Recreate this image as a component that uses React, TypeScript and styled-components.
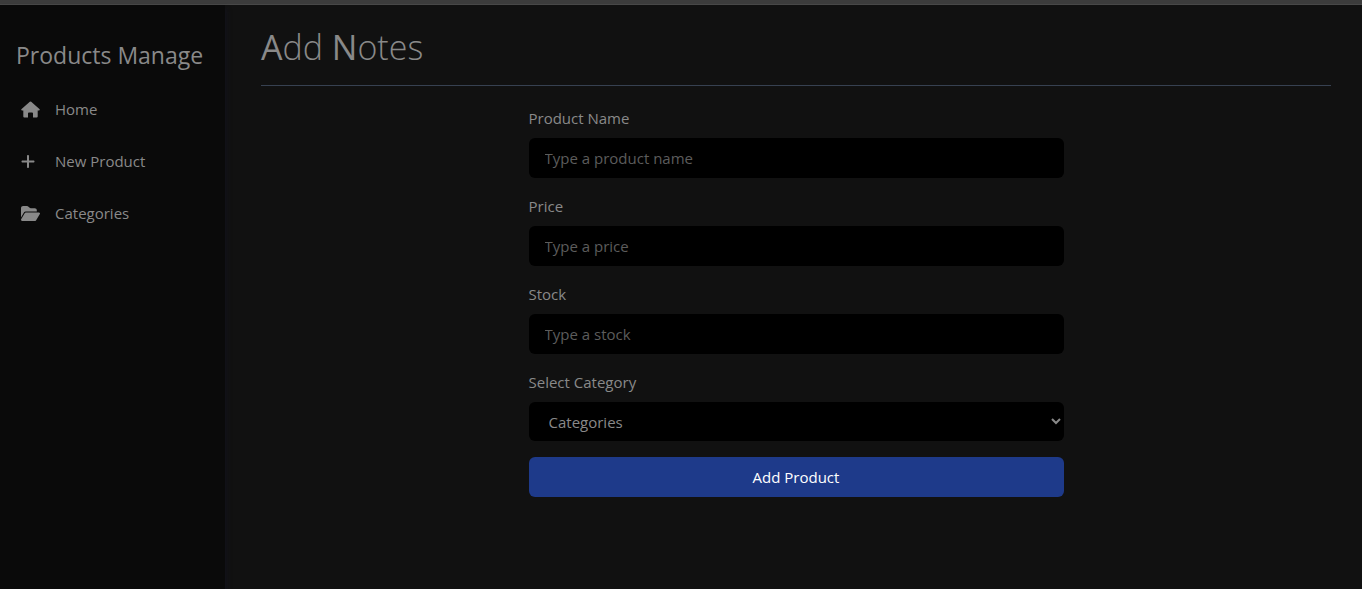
import React from "react";
import styled, { createGlobalStyle } from "styled-components";
import { FaPlus, FaFolderOpen } from "react-icons/fa6";

const GlobalStyle = createGlobalStyle`
  *, *::before, *::after { box-sizing: border-box; }
  body {
    margin: 0;
    background: #111111;
    color: #898989;
    font: 15px/24px "Open Sans", "Noto Sans", sans-serif;
  }
`;

const Page = styled.div`
  display: flex;
  flex-direction: column;
  min-height: 100vh;
`;

const TopBar = styled.div`
  height: 5px;
  background: #3c3c3c;
  border-bottom: 1px solid #484848;
`;

const Body = styled.div`
  display: flex;
  flex: 1;
`;

const Sidebar = styled.aside`
  flex: none;
  width: 225px;
  padding: 32px 16px;
  background: #0a0a0a;
  box-shadow: 2px 4px 4px #12121a;
`;

const Brand = styled.h2`
  margin: 0 0 20px;
  font-size: 23px;
  line-height: 36px;
  font-weight: 400;
  white-space: nowrap;
`;

const Nav = styled.nav`
  display: flex;
  flex-direction: column;
  gap: 20px;
`;

const NavLink = styled.a`
  display: flex;
  align-items: center;
  height: 32px;
  padding-left: 5px;
  color: inherit;
  text-decoration: none;
`;

const NavIcon = styled.span<{ $size: number }>`
  display: flex;
  width: 34px;

  svg {
    width: ${({ $size }) => $size}px;
    height: 17px;
  }
`;

const Main = styled.main`
  flex: 1;
  padding: 20px 31px 20px 36px;
`;

const Title = styled.h1`
  margin: 0 0 20px;
  padding-bottom: 15px;
  border-bottom: 1px solid #374151;
  font-size: 34px;
  line-height: 45px;
  font-weight: 300;
`;

const Capital = styled.span`
  font-weight: 400;
`;

const Form = styled.form`
  display: flex;
  flex-direction: column;
  gap: 16px;
  width: 50%;
  margin: 0 auto;
`;

const Field = styled.div`
  display: flex;
  flex-direction: column;
  gap: 8px;
`;

const Label = styled.label`
  line-height: 24px;
`;

const Input = styled.input`
  height: 40px;
  padding: 0 16px;
  border: 0;
  border-radius: 6px;
  background: #000000;
  color: inherit;
  font: inherit;

  &::placeholder { color: #5c5c5c; opacity: 1; }
`;

const Select = styled.select`
  height: 39px;
  padding: 0 16px;
  border: 0;
  border-radius: 6px;
  background: #000000;
  color: inherit;
  font: inherit;
`;

const Submit = styled.button`
  height: 40px;
  border: 0;
  border-radius: 6px;
  background: #1e3a8a;
  color: #ffffff;
  font: inherit;
`;

const HomeIcon = () => (
  <svg viewBox="0 0 19 17" fill="currentColor" aria-hidden="true">
    <path d="M8.8.8a1 1 0 0 1 1.4 0l8.2 7.2c.7.6.3 1.5-.5 1.5h-1.2v6a1 1 0 0 1-1 1H12v-4a1 1 0 0 0-1-1H8a1 1 0 0 0-1 1v4H3.300a1 1 0 0 1-1-1v-6H1.100C.3 9.500-.1 8.600.6 8z" />
  </svg>
);

const links = [
  { label: "Home", icon: <HomeIcon />, size: 19 },
  { label: "New Product", icon: <FaPlus />, size: 14 },
  { label: "Categories", icon: <FaFolderOpen />, size: 19 },
];

const fields = [
  { id: "name", label: "Product Name", placeholder: "Type a product name" },
  { id: "price", label: "Price", placeholder: "Type a price" },
  { id: "stock", label: "Stock", placeholder: "Type a stock" },
];

export default function App() {
  return (
    <Page>
      <GlobalStyle />
      <TopBar />
      <Body>
        <Sidebar>
          <Brand>Products Manage</Brand>
          <Nav>
            {links.map((link) => (
              <NavLink key={link.label} href="#">
                <NavIcon $size={link.size}>{link.icon}</NavIcon>
                {link.label}
              </NavLink>
            ))}
          </Nav>
        </Sidebar>
        <Main>
          <Title>
            <Capital>A</Capital>dd <Capital>N</Capital>otes
          </Title>
          <Form onSubmit={(event) => event.preventDefault()}>
            {fields.map((field) => (
              <Field key={field.id}>
                <Label htmlFor={field.id}>{field.label}</Label>
                <Input id={field.id} placeholder={field.placeholder} />
              </Field>
            ))}
            <Field>
              <Label htmlFor="category">Select Category</Label>
              <Select id="category">
                <option>Categories</option>
              </Select>
            </Field>
            <Submit type="submit">Add Product</Submit>
          </Form>
        </Main>
      </Body>
    </Page>
  );
}
